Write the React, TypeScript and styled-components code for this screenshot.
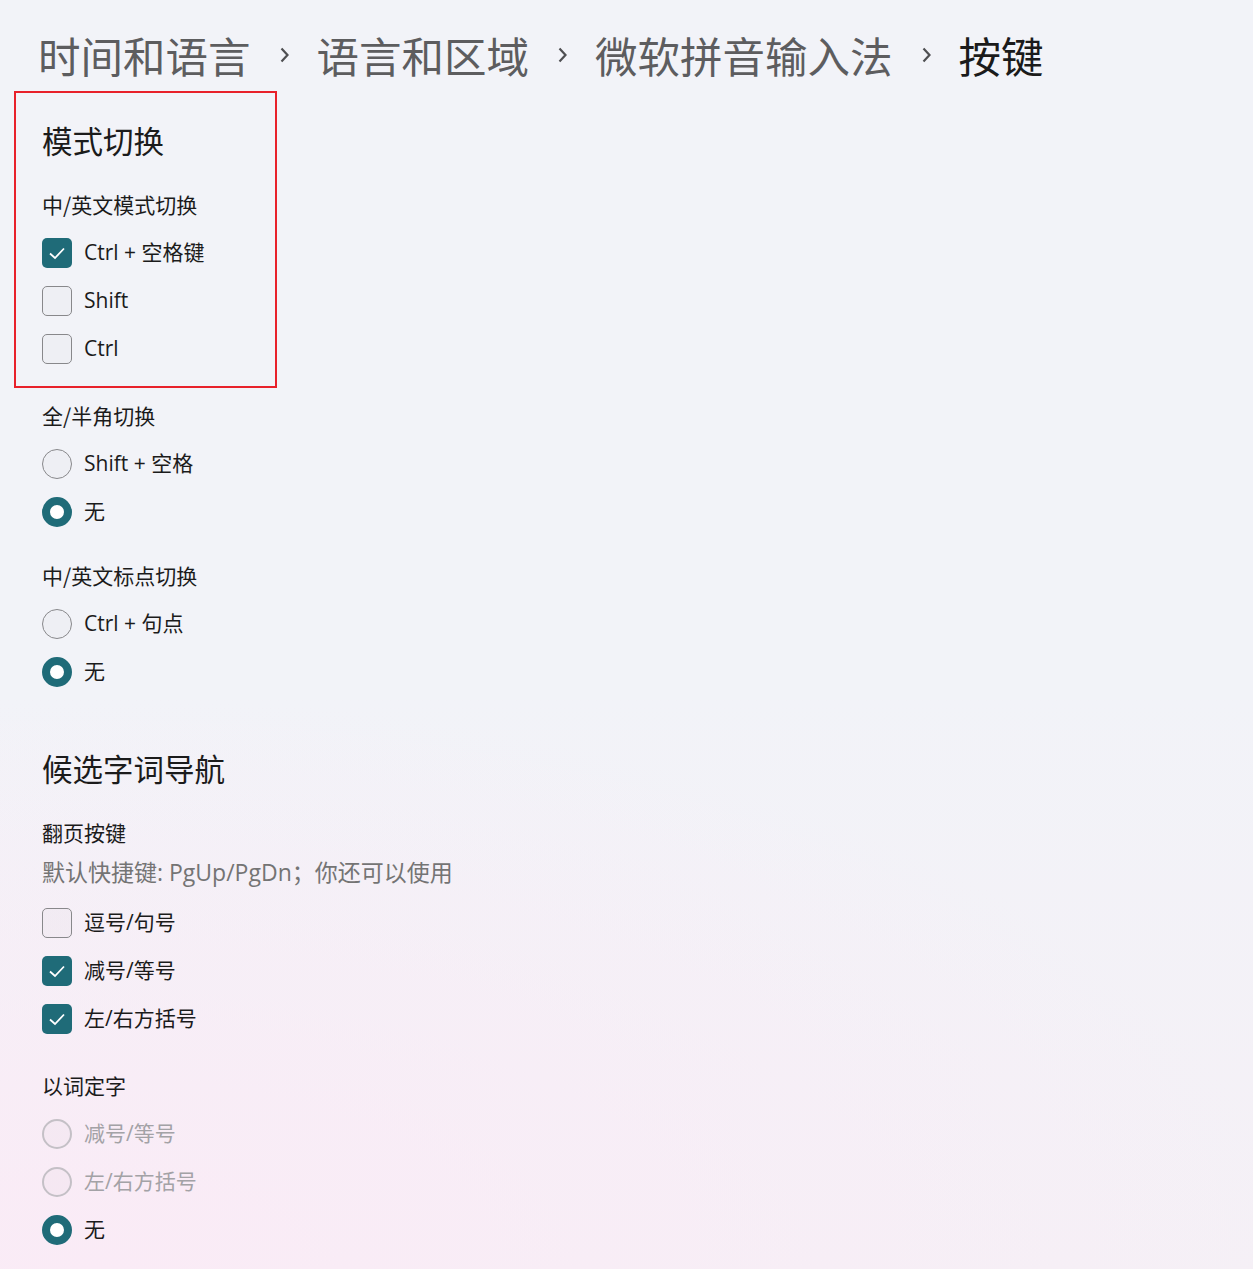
import { Fragment } from "react";
import { createGlobalStyle, styled } from "styled-components";

const GlobalStyle = createGlobalStyle`
  html, body {
    margin: 0;
    min-height: 100%;
  }
  body {
    font-family: "Open Sans", "Noto Sans CJK SC", sans-serif;
    color: #1b1b1b;
    background:
      radial-gradient(ellipse 95% 45% at 8% 100%, rgba(250, 235, 246, 1) 0%, rgba(250, 235, 246, 0) 100%),
      linear-gradient(180deg, #f2f3f8 0%, #f2f3f8 55%, #f5f0f6 100%);
    background-attachment: fixed;
  }
`;

const Page = styled.div`
  min-height: 100vh;
  box-sizing: border-box;
  padding: 27px 0 20px 42px;
`;

const Breadcrumb = styled.nav`
  display: flex;
  align-items: center;
  gap: 27px;
  margin-left: -4px;
  height: 55px;
  font-family: "Noto Sans CJK SC", sans-serif;
  font-size: 42.5px;
  line-height: 55px;
`;

const Crumb = styled.span<{ $current?: boolean }>`
  color: ${(p) => (p.$current ? "#1b1b1b" : "#5d5d5f")};
`;

const Highlight = styled.div`
  box-sizing: border-box;
  width: 263px;
  margin: 9px 0 0 -28px;
  padding: 27px 26px 13px;
  border: 2px solid #e8202a;
`;

const SectionTitle = styled.h2<{ $gap?: number }>`
  margin: ${(p) => p.$gap ?? 0}px 0 0;
  font-family: "Noto Sans CJK SC", sans-serif;
  font-size: 30.5px;
  font-weight: 400;
  line-height: 40px;
`;

const Group = styled.div<{ $gap: number }>`
  margin-top: ${(p) => p.$gap}px;
`;

const GroupLabel = styled.div`
  font-family: "Noto Sans CJK SC", sans-serif;
  font-size: 21px;
  line-height: 30px;
  margin-bottom: 10px;
`;

const Hint = styled.div`
  font-size: 23px;
  line-height: 32px;
  color: #747474;
  margin: -1px 0 11px;
`;

const Row = styled.label<{ $disabled?: boolean }>`
  display: flex;
  align-items: center;
  gap: 12px;
  height: 48px;
  font-size: 21px;
  line-height: 30px;
  color: ${(p) => (p.$disabled ? "#a3a2a6" : "#1b1b1b")};
`;

const RowText = styled.span`
  margin-top: -2px;
`;

const Box = styled.span<{ $checked?: boolean }>`
  box-sizing: border-box;
  width: 30px;
  height: 30px;
  border-radius: 5px;
  display: flex;
  align-items: center;
  justify-content: center;
  background: ${(p) => (p.$checked ? "#1f6b78" : "rgba(0, 0, 0, 0.015)")};
  border: ${(p) => (p.$checked ? "none" : "1.5px solid #88888b")};
`;

const Radio = styled.span<{ $checked?: boolean; $disabled?: boolean }>`
  box-sizing: border-box;
  width: 30px;
  height: 30px;
  border-radius: 50%;
  background: ${(p) => (p.$checked ? "#fff" : "rgba(0, 0, 0, 0.015)")};
  border: ${(p) =>
    p.$checked
      ? "8px solid #1f6b78"
      : p.$disabled
        ? "2px solid #c4c0c6"
        : "1.5px solid #88888b"};
`;

function Chevron() {
  return (
    <svg width="12" height="18" viewBox="0 0 12 18" aria-hidden>
      <path d="M3.5 2.5 L9.5 9 L3.5 15.5" fill="none" stroke="#4f4f52" strokeWidth="2.2" />
    </svg>
  );
}

function Check() {
  return (
    <svg width="20" height="20" viewBox="0 0 20 20" aria-hidden>
      <path d="M3 10.5 L8 15 L17 5.5" fill="none" stroke="#fff" strokeWidth="1.8" />
    </svg>
  );
}

type Option = { text: string; checked?: boolean; disabled?: boolean };

function CheckRow({ text, checked }: Option) {
  return (
    <Row>
      <Box $checked={checked}>{checked && <Check />}</Box>
      <RowText>{text}</RowText>
    </Row>
  );
}

function RadioRow({ text, checked, disabled }: Option) {
  return (
    <Row $disabled={disabled}>
      <Radio $checked={checked} $disabled={disabled} />
      <RowText>{text}</RowText>
    </Row>
  );
}

const crumbs = ["时间和语言", "语言和区域", "微软拼音输入法", "按键"];

export default function App() {
  return (
    <>
      <GlobalStyle />
      <Page>
        <Breadcrumb>
          {crumbs.map((c, i) => (
            <Fragment key={c}>
              {i > 0 && <Chevron />}
              <Crumb $current={i === crumbs.length - 1}>{c}</Crumb>
            </Fragment>
          ))}
        </Breadcrumb>

        <Highlight>
          <SectionTitle>模式切换</SectionTitle>
          <Group $gap={29}>
            <GroupLabel>中/英文模式切换</GroupLabel>
            <CheckRow text="Ctrl + 空格键" checked />
            <CheckRow text="Shift" />
            <CheckRow text="Ctrl" />
          </Group>
        </Highlight>

        <Group $gap={12}>
          <GroupLabel>全/半角切换</GroupLabel>
          <RadioRow text="Shift + 空格" />
          <RadioRow text="无" checked />
        </Group>

        <Group $gap={24}>
          <GroupLabel>中/英文标点切换</GroupLabel>
          <RadioRow text="Ctrl + 句点" />
          <RadioRow text="无" checked />
        </Group>

        <SectionTitle $gap={52}>候选字词导航</SectionTitle>

        <Group $gap={29}>
          <GroupLabel>翻页按键</GroupLabel>
          <Hint>默认快捷键: PgUp/PgDn；你还可以使用</Hint>
          <CheckRow text="逗号/句号" />
          <CheckRow text="减号/等号" checked />
          <CheckRow text="左/右方括号" checked />
        </Group>

        <Group $gap={27}>
          <GroupLabel>以词定字</GroupLabel>
          <RadioRow text="减号/等号" disabled />
          <RadioRow text="左/右方括号" disabled />
          <RadioRow text="无" checked />
        </Group>
      </Page>
    </>
  );
}
